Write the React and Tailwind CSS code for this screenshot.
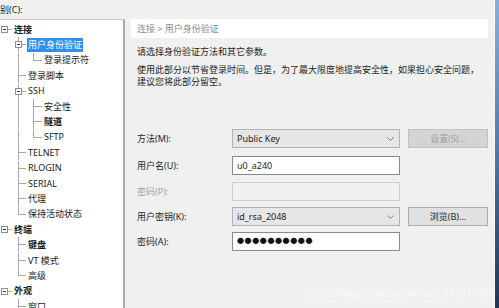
import React from "react";

// tree rows: level, label, box = expandable, last = no next sibling
const nodes = [
  { label: "连接", level: 0, box: true, bold: true },
  { label: "用户身份验证", level: 1, box: true, selected: true, anc: [false, true] },
  { label: "登录提示符", level: 2, last: true, anc: [false, true, true] },
  { label: "登录脚本", level: 1, anc: [false, true] },
  { label: "SSH", level: 1, box: true, anc: [false, true] },
  { label: "安全性", level: 2, anc: [false, true, true] },
  { label: "隧道", level: 2, bold: true, anc: [false, true, true] },
  { label: "SFTP", level: 2, last: true, anc: [false, true, true] },
  { label: "TELNET", level: 1, anc: [false, true] },
  { label: "RLOGIN", level: 1, anc: [false, true] },
  { label: "SERIAL", level: 1, anc: [false, true] },
  { label: "代理", level: 1, anc: [false, true] },
  { label: "保持活动状态", level: 1, last: true, anc: [false, true] },
  { label: "终端", level: 0, box: true, bold: true },
  { label: "键盘", level: 1, bold: true, anc: [false, true] },
  { label: "VT 模式", level: 1, anc: [false, true] },
  { label: "高级", level: 1, last: true, anc: [false, true] },
  { label: "外观", level: 0, box: true, bold: true },
  { label: "窗口", level: 1, anc: [false, true] },
];

const W = [12, 14, 16];
const O = [4, 6, 7];
const H = 15.4;
const LINE = "#a8a8a8";

function Gutter({ width, off, up, down, across, box }) {
  const mid = 7.5;
  const x = off + 0.5;
  return (
    <svg width={width} height={H} className="shrink-0" shapeRendering="crispEdges">
      {up && <line x1={x} y1={0} x2={x} y2={mid} stroke={LINE} />}
      {down && <line x1={x} y1={mid} x2={x} y2={H} stroke={LINE} />}
      {across && <line x1={x} y1={mid} x2={width} y2={mid} stroke={LINE} />}
      {box && (
        <g>
          <rect x={off - 2.5} y={mid - 3} width={6} height={6} fill="#fff" stroke="#8f8f8f" />
          <line x1={off - 1} y1={mid} x2={off + 2} y2={mid} stroke="#3c3c3c" />
        </g>
      )}
    </svg>
  );
}

function TreeRow({ n }) {
  const anc = n.anc || [];
  return (
    <div className="flex items-center h-[15.4px]">
      {Array.from({ length: n.level }).map((_, i) => (
        <Gutter key={i} width={W[i]} off={O[i]} up={i > 0 && anc[i + 1] !== undefined ? true : false} down={i > 0} />
      ))}
      <Gutter width={W[n.level]} off={O[n.level]} up={n.level > 0} down={n.level > 0 && !n.last} across box={n.box} />
      <span
        className={
          "ml-[1px] px-[1px] leading-[14px] whitespace-nowrap " +
          (n.selected ? "bg-[#3390ea] text-white " : "text-[#1a1a1a] ") +
          (n.bold ? "font-bold" : "")
        }
      >
        {n.label}
      </span>
    </div>
  );
}

function Chevron() {
  return (
    <svg width="7" height="4" viewBox="0 0 7 4" className="shrink-0">
      <path d="M0.5 0.5 L3.5 3.5 L6.5 0.5" fill="none" stroke="#6e6e6e" strokeWidth="0.9" />
    </svg>
  );
}

function Row({ label, disabled, className, children, button }) {
  return (
    <div className={"flex items-center h-[19px] " + (className || "")}>
      <div className={"w-[101px] pl-[6px] whitespace-nowrap " + (disabled ? "text-[#a3a3a3]" : "text-[#1e1e1e]")}>{label}</div>
      {children}
      {button}
    </div>
  );
}

export default function App() {
  return (
    <div className="relative w-[499px] h-[308px] overflow-hidden bg-[#f0f0f0] flex text-[9px] font-['Noto_Sans','Noto_Sans_CJK_SC',sans-serif]">
      {/* 左侧：类别树 */}
      <div className="w-[125px] shrink-0 flex flex-col">
        <div className="h-[19px] flex items-center text-[#1e1e1e] whitespace-nowrap">别(C):</div>
        <div className="flex-1 bg-white border-t border-[#c9c9c9] border-r-2 border-r-[#a9a9a9] pt-[2px] overflow-hidden">
          {nodes.map((n, i) => (
            <TreeRow key={i} n={n} />
          ))}
        </div>
      </div>

      {/* 右侧：设置内容 */}
      <div className="flex-1 pt-[19px] px-[6px]">
        <div className="h-[19px] bg-white flex items-center pl-[6px] text-[#8c8c8c] whitespace-nowrap">连接 &gt; 用户身份验证</div>
        <p className="mt-[8px] pl-[6px] leading-[12px] text-[#1e1e1e] whitespace-nowrap">请选择身份验证方法和其它参数。</p>
        <p className="mt-[6px] pl-[6px] leading-[12px] text-[#1e1e1e] whitespace-nowrap">
          使用此部分以节省登录时间。但是，为了最大限度地提高安全性，如果担心安全问题，
          <br />
          建议您将此部分留空。
        </p>

        <div className="mt-[41px]">
          <Row
            label="方法(M):"
            button={<div className="ml-[8px] w-[80px] h-[19px] flex items-center justify-center bg-[#d4d4d4] border border-[#c2c2c2] text-[#a0a0a0]">设置(S)...</div>}
          >
            <div className="w-[168px] h-[19px] flex items-center justify-between pl-[4px] pr-[5px] bg-[#e6e6e6] border border-[#b3b3b3] text-[#1e1e1e]">
              <span>Public Key</span>
              <Chevron />
            </div>
          </Row>
          <Row label="用户名(U):" className="mt-[8px]">
            <div className="w-[168px] h-[19px] flex items-center pl-[4px] bg-white border border-[#8a8a8a] text-[#1e1e1e]">u0_a240</div>
          </Row>
          <Row label="密码(P):" disabled className="mt-[7px]">
            <div className="w-[168px] h-[19px] bg-[#f0f0f0] border border-[#cccccc]" />
          </Row>
          <Row
            label="用户密钥(K):"
            className="mt-[6px]"
            button={<div className="ml-[8px] w-[80px] h-[19px] flex items-center justify-center bg-[#e1e1e1] border border-[#adadad] text-[#1e1e1e]">浏览(B)...</div>}
          >
            <div className="w-[168px] h-[19px] flex items-center justify-between pl-[4px] pr-[5px] bg-[#e6e6e6] border border-[#b3b3b3] text-[#1e1e1e]">
              <span>id_rsa_2048</span>
              <Chevron />
            </div>
          </Row>
          <Row label="密码(A):" className="mt-[6px]">
            <div className="w-[168px] h-[19px] flex items-center pl-[4px] bg-white border border-[#8a8a8a] text-[#111] text-[7px] tracking-[0.6px]">●●●●●●●●●●</div>
          </Row>
        </div>
      </div>

      {/* 窗口右边框 */}
      <div className="w-[5px] shrink-0 border-l border-[#fafafa] bg-gradient-to-b from-[#86b0dc] via-[#4f78a8] to-[#1f3554]" />

      <div className="absolute right-[7px] bottom-[9px] text-[11px] leading-[12px] text-white/60 whitespace-nowrap font-['Liberation_Sans',sans-serif]">
        https://blog.csdn.net/weixin_44416753
      </div>
    </div>
  );
}
